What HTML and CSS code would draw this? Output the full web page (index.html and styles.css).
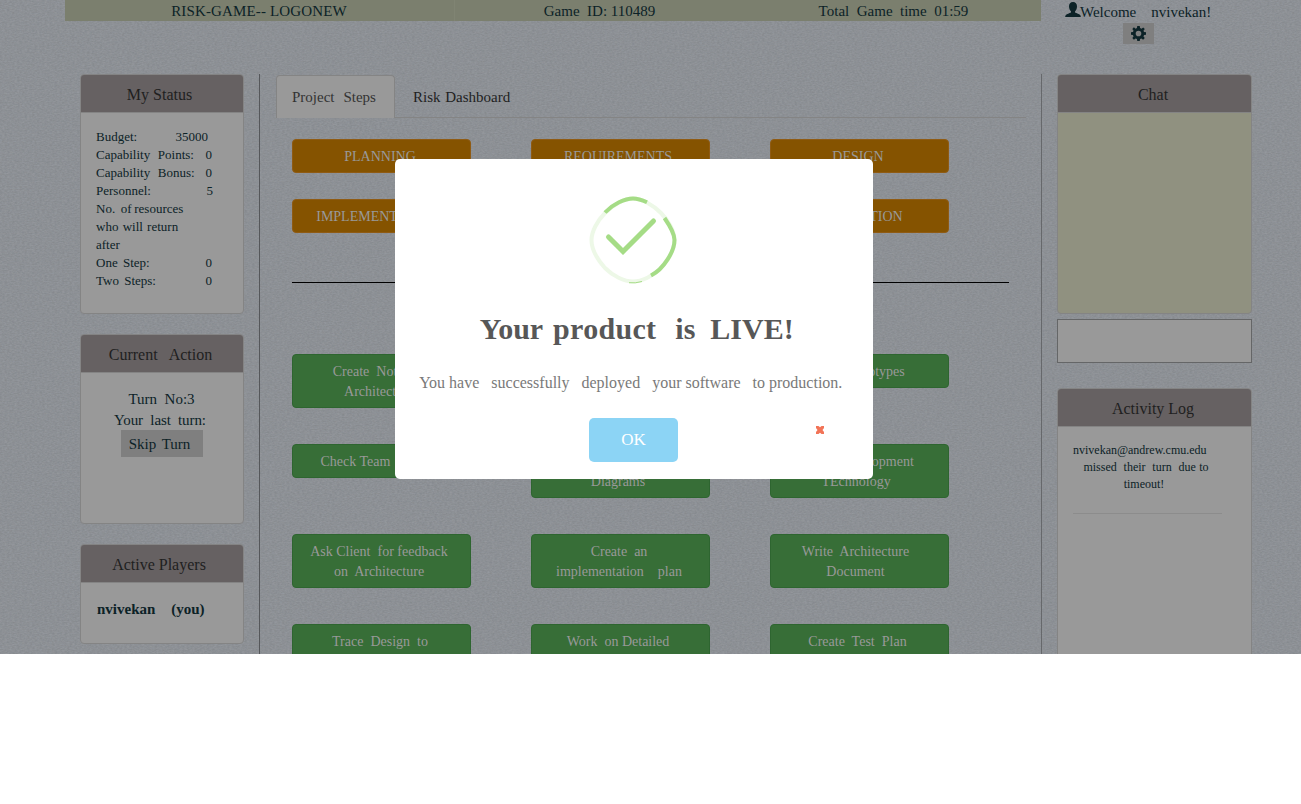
FILE: index.html
```html
<!DOCTYPE html>
<html lang="en">
<head>
<meta charset="utf-8">
<title>Risk Game</title>
<link rel="stylesheet" href="styles.css">
</head>
<body>
<div class="page">
  <svg class="texture" width="1301" height="654" aria-hidden="true">
    <filter id="weave" x="0" y="0" width="100%" height="100%" color-interpolation-filters="sRGB">
      <feTurbulence type="fractalNoise" baseFrequency="0.4 0.75" numOctaves="2" seed="4"/>
      <feColorMatrix type="matrix" values="0.08 0.02 0 0 0.502  0.08 0 0 0 0.526  0.08 0 0.02 0 0.535  0 0 0 0 1"/>
    </filter>
    <rect width="1301" height="654" filter="url(#weave)"/>
  </svg>
  <header class="top">
    <div class="top-cell logo">RISK-GAME-- LOGONEW</div>
    <div class="top-cell game">Game  ID: 110489</div>
    <div class="top-cell time">Total  Game  time  01:59</div>
    <div class="user">
      <div class="welcome"><svg width="16" height="16" viewBox="0 0 16 16"><path d="M8 0C5.500 0 4 1.700 4 4.200C4 6.600 5 8.500 6 9.400V10.600C4.300 11.500 1.800 12 .9 13C.2 13.600.2 15 .2 15H15.800S15.800 13.600 15.100 13C14.200 12 11.700 11.500 10 10.600V9.400C11 8.500 12 6.600 12 4.200C12 1.700 10.500 0 8 0Z"/></svg><span>Welcome    nvivekan!</span></div>
      <button class="gear"><svg width="15" height="15" viewBox="0 0 16 16"><path fill-rule="evenodd" d="M6.700 0H9.300L9.700 2.200L11.200 2.900L13 1.500L14.700 3.200L13.300 5L13.900 6.400L16 6.700V9.300L13.900 9.700L13.300 11.100L14.700 12.900L12.900 14.600L11.100 13.300L9.700 13.900L9.300 16H6.700L6.300 13.900L4.900 13.300L3.100 14.600L1.400 12.900L2.700 11.100L2.100 9.700L0 9.300V6.700L2.100 6.400L2.700 5L1.400 3.100L3.100 1.400L4.900 2.800L6.300 2.200ZM8 5A3 3 0 1 0 8 11A3 3 0 1 0 8 5Z"/></svg></button>
    </div>
  </header>
  <main class="columns">
    <aside class="left">
      <section class="panel status">
        <h3 class="n5">My Status</h3>
        <div class="body">
          <div class="row r4"><span>Budget:</span><span>35000</span></div>
          <div class="row caps"><span>Capability  Points:</span><span>0</span></div>
          <div class="row caps"><span>Capability  Bonus:</span><span>0</span></div>
          <div class="row l1"><span>Personnel:</span><span>5</span></div>
          <div class="line resources">No.  of resources</div>
          <div class="line who">who will return</div>
          <div class="line">after</div>
          <div class="row"><span class="wide">One Step:</span><span>0</span></div>
          <div class="row"><span class="wide">Two Steps:</span><span>0</span></div>
        </div>
      </section>
      <section class="panel action">
        <h3 class="n3">Current   Action</h3>
        <div class="body">
          <div class="line turn">Turn  No:3</div>
          <div class="line last">Your  last  turn:</div>
          <button class="skip">Skip Turn</button>
        </div>
      </section>
      <section class="panel players">
        <h3 class="n5">Active Players</h3>
        <div class="body"><b class="line">nvivekan    (you)</b></div>
      </section>
    </aside>
    <section class="middle">
      <nav class="tabs"><a class="tab active">Project  Steps</a><a class="tab">Risk Dashboard</a></nav>
      <div class="steps">
        <div class="grid phases">
          <button class="btn orange n3">PLANNING</button>
          <button class="btn orange n5">REQUIREMENTS</button>
          <button class="btn orange n3">DESIGN</button>
          <button class="btn orange n8">IMPLEMENTATION</button>
          <button class="btn orange"></button>
          <button class="btn orange n4">PRODUCTION</button>
        </div>
        <hr>
        <div class="grid tasks">
          <button class="btn green n5">Create  Notional
Architecture</button>
          <span></span>
          <button class="btn green n13">Create  Prototypes</button>
          <button class="btn green n8">Check Team  Health</button>
          <button class="btn green n5">&nbsp;
Diagrams</button>
          <button class="btn green n10">Decide Development
 TEchnology</button>
          <button class="btn green n5">Ask Client  for feedback
on  Architecture</button>
          <button class="btn green n3">Create  an
implementation    plan</button>
          <button class="btn green n8">Write  Architecture
Document</button>
          <button class="btn green n3">Trace  Design  to
&nbsp;</button>
          <button class="btn green n5">Work  on Detailed
&nbsp;</button>
          <button class="btn green n4">Create  Test  Plan</button>
        </div>
      </div>
    </section>
    <aside class="right">
      <section class="panel chat"><h3 class="n3">Chat</h3><div class="body"></div></section>
      <div class="message"></div>
      <section class="panel log">
        <h3 class="n3">Activity Log</h3>
        <div class="body"><div class="line mail">nvivekan@andrew.cmu.edu</div><div class="line entry">missed  their  turn  due to</div><div class="line out">timeout!</div></div>
      </section>
    </aside>
  </main>
</div>
<div class="modal">
  <svg class="check" width="90" height="90" viewBox="0 0 90 90" fill="none" stroke="#a5dc86" stroke-width="4">
    <path stroke="#edf8e7" d="M45 3.500C54 3.500 65 10 73 18C81 26 86.500 37 86.500 45C86.500 53 81 64 73 73C65 81 54 86.500 45 86.500C36 86.500 25 81 17 73C9 64 3.500 53 3.500 45C3.500 37 9 26 17 18C25 10 36 3.500 45 3.500Z"/>
    <path d="M17 17.500C25 9 37 3.500 45 3.500C49 3.500 54 5 59 7.300M76.500 23C82 31 86.500 39 86.500 45C86.500 56 76 74 63 80.500"/>
    <path stroke-width="1" d="M41 87.700Q47 88.500 54 86.500"/>
    <path stroke-width="5" stroke-linecap="round" stroke-linejoin="miter" d="M20.500 42L35 56.500L65.500 26"/>
  </svg>
  <h2>Your <span class="product">product</span>  is  LIVE!</h2>
  <p>You have   successfully   deployed   your software   to production.</p>
  <div class="actions">
    <button class="ok">OK</button>
    <svg class="cross" width="8" height="8" viewBox="0 0 8 8"><path d="M0 1.300V0H2.500L4 1.200L5.500 0H8V2L6.500 4L8 6V8H5.500L4 6.800L2.500 8H0V6L1.500 4L0 2Z"/></svg>
  </div>
</div>
</body>
</html>
```
FILE: styles.css
```css
* { box-sizing: border-box; }
body { margin: 0; background: #fff; height: 804px; overflow: hidden; font: 15px/21px "Liberation Serif", serif; color: #0c2227; }
button { font: inherit; color: inherit; border: 0; padding: 0; margin: 0; display: block; }
h2, h3, p, hr { margin: 0; }
svg { display: block; }
.page { position: relative; height: 654px; overflow: hidden; background: #8e9195; }
.texture { position: absolute; inset: 0; }
.top { position: relative; display: grid; grid-template-columns: 390px 293px 293px 195px; margin-left: 65px; height: 74px; align-items: start; }
.top-cell { height: 21px; line-height: 22px; background: #7b7f6e; text-align: center; white-space: pre; }
.logo { border-right: 1px solid #808473; padding-right: 1px; letter-spacing: 0.15px; }
.game { padding-right: 4px; }
.time { padding-right: 2px; }
.user { height: 45px; }
.welcome { display: flex; margin: 2px 0 0 24px; height: 21px; }
.welcome svg { fill: #0c2227; flex: none; }
.welcome span { white-space: pre; margin-left: -1px; }
.gear { width: 31px; height: 21px; margin-left: 82px; background: #7f7f7f; padding: 2px 8px; }
.gear svg { fill: #0c2227; margin-top: -1px; }
.columns { position: relative; display: grid; grid-template-columns: 195px 782px 210px; margin-left: 65px; height: 580px; }
.left { padding: 0 15px; border-right: 1px solid #55575a; display: flex; flex-direction: column; gap: 20px; }
.middle { padding: 1px 15px 0 16px; border-right: 1px solid #66686b; }
.right { padding: 0 0 0 15px; display: flex; flex-direction: column; }
.panel { border: 1px solid #848484; border-radius: 4px; background: #999; flex: none; }
.panel h3 { height: 38px; font-weight: normal; font-size: 16px; line-height: 40px; text-align: center; color: #1f1f1f; background: #666162; border-bottom: 1px solid #848484; border-radius: 3px 3px 0 0; white-space: pre; }
.body { padding: 15px; }
.line { display: block; white-space: pre; }
.status { height: 240px; font-size: 13px; line-height: 18px; }
.row { display: flex; justify-content: space-between; width: 116px; white-space: pre; }
.caps { word-spacing: 0.6px; }
.resources { word-spacing: -0.5px; }
.r4 { width: 112px; }
.l1 { width: 117px; }
.wide { word-spacing: 2px; }
.who { word-spacing: 1px; }
.action { height: 190px; text-align: center; }
.action .turn { padding: 1px 1px 0 0; line-height: 20px; }
.last { padding-right: 4px; line-height: 22px; letter-spacing: -0.1px; }
.skip { width: 82px; height: 27px; background: #7f7f7f; margin: -1px 0 0 25px; padding: 1px 5px 0 0; word-spacing: 2px; }
.players { height: 100px; }
.players .body { padding: 16px 0 0 16px; }
.players .line { word-spacing: 0.2px; }
.panel .n3 { padding-right: 3px; }
.panel .n5 { padding-right: 5px; }
.players .n5 { padding-right: 6px; }
.tabs { display: flex; border-bottom: 1px solid #848484; height: 43px; }
.tab { height: 43px; padding: 12px 16px; white-space: pre; color: #1f1f1f; word-spacing: 1px; }
.active { width: 119px; border: 1px solid #848484; border-bottom: 0; border-radius: 4px 4px 0 0; background: #999; color: #333; padding: 11px 15px; margin-right: 2px; word-spacing: 0.7px; }
.steps { padding: 21px 15px 0 16px; }
.grid { display: grid; grid-template-columns: repeat(3, 239px); align-items: start; }
.phases { grid-auto-rows: 60px; }
.steps hr { width: 717px; border: 0; height: 1px; background: #000; margin: 23px 0 71px; }
.tasks { grid-auto-rows: 90px; }
.btn { width: 179px; min-height: 34px; border-radius: 4px; border: 1px solid; font-size: 14px; line-height: 20px; color: #999; text-align: center; white-space: pre; padding: 7px 0 5px; }
.btn.n3 { padding-right: 3px; }
.btn.n4 { padding-right: 4px; }
.btn.n5 { padding-right: 5px; }
.btn.n8 { padding-right: 8px; }
.btn.n10 { padding-right: 10px; }
.btn.n13 { padding-right: 13px; }
.orange { background: #855300; border-color: #8f5b14; }
.green { background: #376e37; border-color: #2e6530; }
.chat { height: 240px; background: #909180; }
.message { height: 44px; margin-top: 5px; border: 1px solid #656667; background: #999; flex: none; }
.log { height: 300px; margin-top: 25px; font-size: 12px; line-height: 17px; }
.log .body { text-align: center; padding-right: 31px; }
.mail { text-align: left; }
.entry { word-spacing: 0.4px; padding-right: 1px; }
.out { padding-right: 5px; }
.log .body::after { content: ""; display: block; width: 149px; height: 1px; background: #8c8c8c; margin-top: 20px; }
.modal { position: absolute; left: 395px; top: 159px; width: 477.5px; height: 320px; border-radius: 5px; background: #fff; padding-top: 36px; display: flex; flex-direction: column; align-items: center; }
.check { margin-left: -1px; }
.modal h2 { font-size: 30px; line-height: 40px; color: #575757; margin-top: 24px; padding-left: 6px; white-space: pre; }
.product { margin: 0 4px 0 3px; letter-spacing: 0.3px; }
.modal p { font-size: 16px; line-height: 24px; color: #797979; margin-top: 22px; white-space: pre; padding-right: 6px; }
.actions { width: 100%; display: flex; margin-top: 23px; padding-left: 194px; }
.ok { width: 89px; height: 44px; border-radius: 5px; background: #8cd4f5; color: #fff; font-size: 17px; padding-bottom: 2px; }
.cross { margin: 8px 0 0 138px; fill: #f27457; }
```
